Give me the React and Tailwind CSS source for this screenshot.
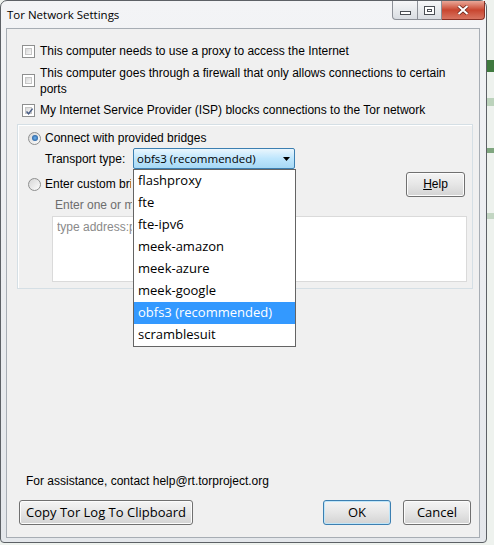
import React from "react"

const ui = "font-['Liberation_Sans',Arial,sans-serif]"
const segoe = "font-['Open_Sans',sans-serif]"

const TRANSPORTS = [
  "flashproxy",
  "fte",
  "fte-ipv6",
  "meek-amazon",
  "meek-azure",
  "meek-google",
  "obfs3 (recommended)",
  "scramblesuit",
]

function Checkbox({ checked }) {
  return (
    <span className="w-[13px] h-[13px] shrink-0 border border-[#8e8f8f] bg-white p-[2px] flex">
      <span className="relative flex-1 bg-linear-to-br from-[#d8d8d8] to-[#f9f9f9] border border-[#c6c6c6]">
        {checked && (
          <svg viewBox="0 0 9 9" className="absolute -left-[1px] -top-[1px] w-[9px] h-[9px]">
            <path d="M1.5 4.5 L3.6 6.8 L7.6 1.6" fill="none" stroke="#4a5e86" strokeWidth="1.5" />
          </svg>
        )}
      </span>
    </span>
  )
}

function Radio({ checked }) {
  return (
    <span className="w-[13px] h-[13px] shrink-0 rounded-full border border-[#8e8f8f] bg-linear-to-br from-[#d6d6d6] to-[#fdfdfd] flex items-center justify-center">
      {checked && (
        <span className="w-[6px] h-[6px] rounded-full bg-radial from-[#6fb3ef] to-[#124a8a]" />
      )}
    </span>
  )
}

function Button({ children, className = "", focused }) {
  return (
    <div
      className={`h-[25px] rounded-[3px] border flex items-center justify-center bg-linear-to-b from-[#f4f4f4] via-[#e6e6e6] to-[#d3d3d3] ${
        focused ? "border-[#3c7fb1] shadow-[inset_0_0_0_1px_#bfe5f8]" : "border-[#707070] shadow-[inset_0_0_0_1px_#fcfcfc]"
      } ${className}`}
    >
      {children}
    </div>
  )
}

export default function App() {
  return (
    <div className="w-[494px] h-[545px] flex bg-[#eef2ee] overflow-hidden">
      <div className="w-[487px] h-[543px] shrink-0 border border-[#5d6166] rounded-t-[7px] rounded-b-[4px] bg-linear-to-b from-[#f3f4f6] to-[#e4e7eb] flex flex-col">
        {/* title bar */}
        <div className="h-[27px] flex shrink-0">
          <div className={`pl-[6px] pt-[6px] text-[11.5px] leading-[16px] text-black flex-1 ${segoe}`}>
            Tor Network Settings
          </div>
          <div className="flex h-[19px] mr-[1px]">
            <div className="w-[26px] h-full border border-[#8c9097] border-t-0 rounded-bl-[4px] bg-linear-to-b from-[#f6f7f8] to-[#d9dde2] flex items-center justify-center">
              <span className="w-[11px] h-[4px] mt-[5px] border border-[#4b4f55] bg-white" />
            </div>
            <div className="w-[24px] h-full border-b border-r border-[#8c9097] bg-linear-to-b from-[#f6f7f8] to-[#d9dde2] flex items-center justify-center">
              <span className="w-[11px] h-[9px] border border-[#4b4f55] bg-white flex p-[2px]">
                <span className="flex-1 border border-[#4b4f55]" />
              </span>
            </div>
            <div className="w-[43px] h-full border-b border-r border-[#8a3024] rounded-br-[4px] bg-linear-to-b from-[#e9a798] via-[#c8452f] to-[#d87461] flex items-center justify-center">
              <svg viewBox="0 0 12 10" className="w-[12px] h-[10px]">
                <path d="M1.5 1 L10.5 9 M10.5 1 L1.5 9" stroke="#5a1a10" strokeWidth="3.4" />
                <path d="M1.5 1 L10.5 9 M10.5 1 L1.5 9" stroke="#ffffff" strokeWidth="2.2" />
              </svg>
            </div>
          </div>
        </div>

        {/* client area */}
        <div className={`ml-[5px] w-[474px] h-[510px] border border-[#a7adb4] bg-[#f0f0f0] flex flex-col text-[12px] text-black ${ui}`}>
          <div className="pt-[14px] pl-[15px] flex flex-col">
            <div className="h-[16px] flex items-center gap-[5px]">
              <Checkbox />
              <span>This computer needs to use a proxy to access the Internet</span>
            </div>
            <div className="mt-[6px] flex gap-[5px]">
              <span className="mt-[9px]">
                <Checkbox />
              </span>
              <span className="leading-[16px]">
                This computer goes through a firewall that only allows connections to certain
                <br />
                ports
              </span>
            </div>
            <div className="mt-[5px] h-[16px] flex items-center gap-[5px]">
              <Checkbox checked />
              <span>My Internet Service Provider (ISP) blocks connections to the Tor network</span>
            </div>
          </div>

          {/* bridges group */}
          <div className="ml-[10px] mt-[6px] w-[456px] h-[165px] border border-[#d5dfe5] shadow-[inset_1px_1px_0_#ffffff] flex flex-col pl-[10px] pt-[5px]">
            <div className="h-[16px] flex items-center gap-[4px]">
              <Radio checked />
              <span>Connect with provided bridges</span>
            </div>
            <div className="mt-[2px] h-[21px] flex items-center pl-[17px]">
              <span className="w-[88px]">Transport type:</span>
              <div className="relative">
                <div className={`w-[162px] h-[21px] border border-[#3c7fb1] rounded-[2px] bg-linear-to-b from-[#eaf6fd] via-[#bee6fd] to-[#a7d9f5] flex items-center pl-[3px] pr-[4px] text-[11.5px] ${segoe}`}>
                  <span className="flex-1">obfs3 (recommended)</span>
                  <svg viewBox="0 0 7 4" className="w-[7px] h-[4px]">
                    <path d="M0 0 H7 L3.5 4 Z" fill="#000" />
                  </svg>
                </div>
                <div className={`absolute left-0 top-full z-10 w-[163px] border border-[#646464] bg-white flex flex-col text-[13px] ${segoe}`}>
                  {TRANSPORTS.map((t) => (
                    <div
                      key={t}
                      className={`h-[22px] pl-[4px] flex items-center ${
                        t === "obfs3 (recommended)" ? "bg-[#3399ff] text-white" : "text-black"
                      }`}
                    >
                      {t}
                    </div>
                  ))}
                </div>
              </div>
            </div>
            <div className="mt-[4px] h-[22px] flex items-center">
              <span className="flex items-center gap-[4px] flex-1">
                <Radio />
                <span className="w-[86px] overflow-hidden whitespace-nowrap">Enter custom bridges</span>
              </span>
              <Button className="w-[59px] h-[22px] mr-[7px]">
                <span>
                  <span className="underline">H</span>elp
                </span>
              </Button>
            </div>
            <div className="mt-[2px] h-[16px] pl-[27px] flex items-center text-[#6d6d6d]">
              <span className="w-[77px] overflow-hidden whitespace-nowrap">Enter one or more bridge relays</span>
            </div>
            <div className="mt-[3px] ml-[24px] w-[415px] h-[66px] border border-[#dadada] bg-white pl-[4px] pt-[2px] text-[#8a8a8a] leading-[16px]">
              <div className="w-[75px] overflow-hidden whitespace-nowrap">type address:port</div>
            </div>
          </div>

          <div className="flex-1" />
          <div className="pl-[19px] h-[16px] flex items-center mb-[11px]">
            For assistance, contact help@rt.torproject.org
          </div>
          <div className={`flex items-center pl-[12px] pr-[8px] mb-[12px] text-[13px] ${segoe}`}>
            <Button className="w-[174px]">Copy Tor Log To Clipboard</Button>
            <div className="flex-1" />
            <Button focused className="w-[68px]">
              OK
            </Button>
            <Button className="w-[68px] ml-[12px]">Cancel</Button>
          </div>
        </div>
      </div>

      {/* desktop behind */}
      <div className="flex-1 flex flex-col bg-[#eef2ee]">
        <div className="h-[60px]" />
        <div className="h-[12px] bg-[#3f7a3f]" />
        <div className="h-[26px]" />
        <div className="h-[8px] bg-[#bcd3bc]" />
        <div className="h-[42px]" />
        <div className="h-[5px] bg-[#7fa67f]" />
        <div className="h-[60px]" />
        <div className="h-[6px] bg-[#c3d6c3]" />
      </div>
    </div>
  )
}
